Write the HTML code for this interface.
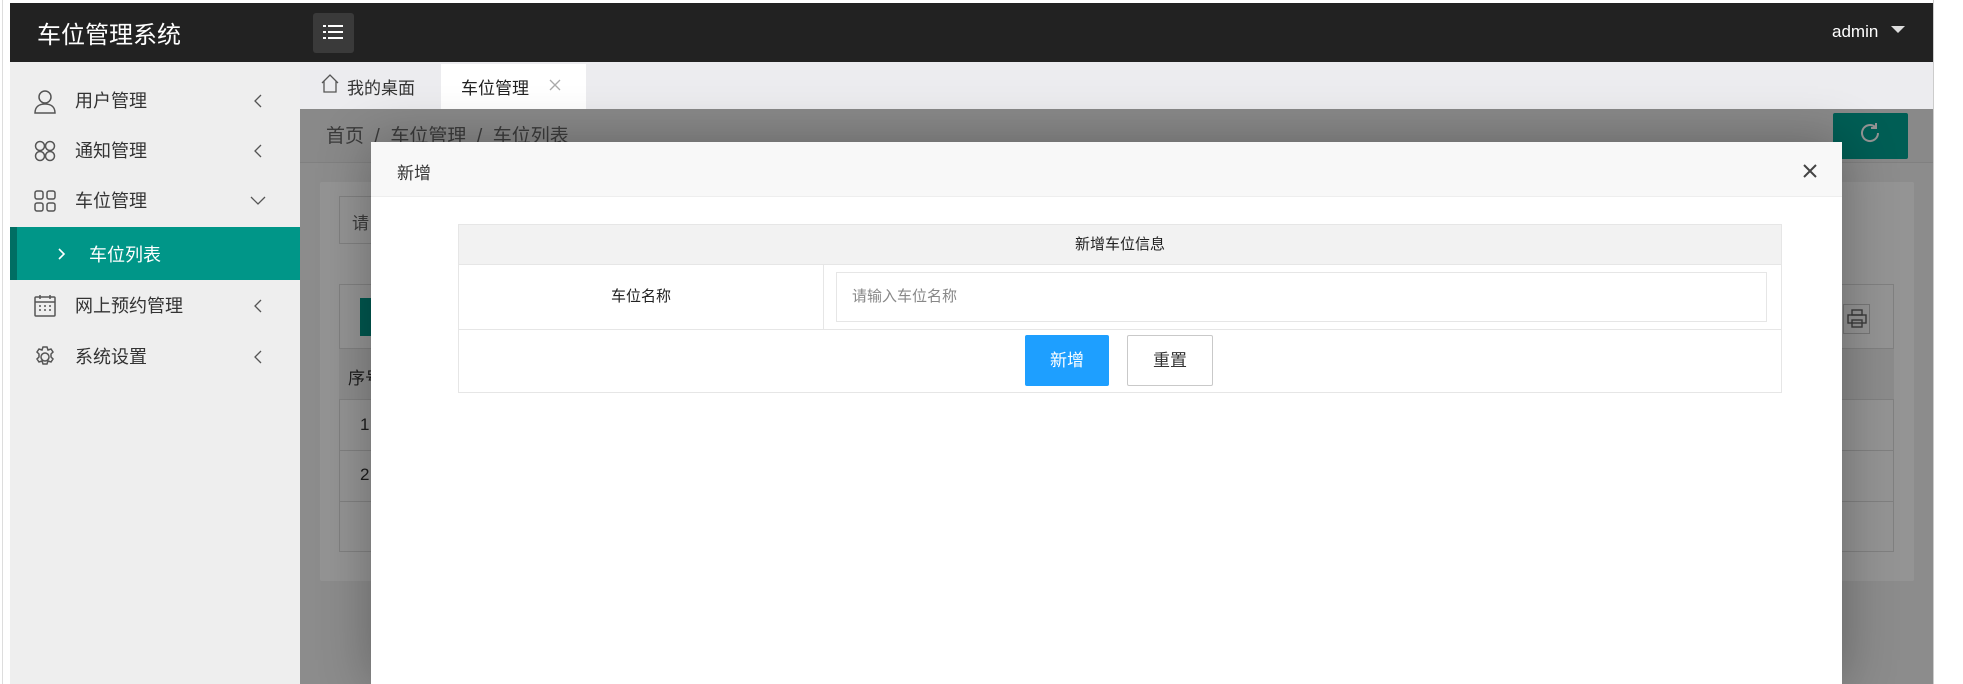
<!DOCTYPE html>
<html><head><meta charset="utf-8"><style>
*{margin:0;padding:0;box-sizing:border-box}
body{width:1963px;height:684px;overflow:hidden;background:#fff;position:relative;font-family:"Liberation Sans","Noto Sans CJK SC",sans-serif;font-size:17px;color:#333}
.a{position:absolute}
.top{left:10px;top:3px;width:1923px;height:59px;background:#222}
.side{left:10px;top:62px;width:290px;height:622px;background:#eee}
.mi{position:absolute;left:0;width:290px;height:50px;line-height:50px;font-size:18px;color:#333}
.mi .t{position:absolute;left:65px}
.mi .ch{position:absolute;left:243px;top:18px}
.mi svg.ic{position:absolute;left:24px;top:14px}
.tabs{left:300px;top:62px;width:1633px;height:47px;background:#ececef}
.ct{left:300px;top:109px;width:1633px;height:575px;background:#f2f2f2}
.ov{left:300px;top:109px;width:1633px;height:575px;background:rgba(0,0,0,0.42)}
</style></head><body>
<div class="a" style="left:1933px;top:0;width:1px;height:684px;background:#ccc"></div>
<div class="a" style="left:0;top:0;width:3px;height:684px;border-right:1px solid #ddd"></div>
<div class="a top"></div>
<div class="a" style="left:37px;top:15px;color:#fff;font-size:24px">车位管理系统</div>
<div class="a" style="left:313px;top:13px;width:41px;height:40px;background:#3a3a3a;border-radius:3px"></div>
<svg class="a" style="left:323px;top:25px" width="22" height="16"><g fill="#fff"><rect x="0" y="0" width="3" height="2"/><rect x="5" y="0" width="15" height="2"/><rect x="0" y="6" width="3" height="2"/><rect x="5" y="6" width="15" height="2"/><rect x="0" y="12" width="3" height="2"/><rect x="5" y="12" width="15" height="2"/></g></svg>
<div class="a" style="left:1832px;top:22px;color:#fff;font-size:17px">admin</div>
<div class="a" style="left:1891px;top:26px;width:0;height:0;border-left:7px solid transparent;border-right:7px solid transparent;border-top:7px solid #ddd"></div>

<div class="a side">
 <div class="mi" style="top:14px"><svg class="ic" width="22" height="24" fill="none" stroke="#555" stroke-width="1.5"><circle cx="11" cy="7" r="6"/><path d="M1 23c0-6 4-9 10-9s10 3 10 9z"/></svg><span class="t">用户管理</span><svg class="ch" width="10" height="14" fill="none" stroke="#555" stroke-width="1.3"><path d="M8 1L2 7l6 6"/></svg></div>
 <div class="mi" style="top:64px"><svg class="ic" width="22" height="22" fill="none" stroke="#555" stroke-width="1.5"><circle cx="6" cy="6" r="4.5"/><circle cx="16" cy="6" r="4.5"/><circle cx="6" cy="16" r="4.5"/><circle cx="16" cy="16" r="4.5"/></svg><span class="t">通知管理</span><svg class="ch" width="10" height="14" fill="none" stroke="#555" stroke-width="1.3"><path d="M8 1L2 7l6 6"/></svg></div>
 <div class="mi" style="top:114px"><svg class="ic" width="22" height="22" fill="none" stroke="#555" stroke-width="1.5"><rect x="1" y="1" width="8" height="8" rx="2"/><rect x="13" y="1" width="8" height="8" rx="2"/><rect x="1" y="13" width="8" height="8" rx="2"/><rect x="13" y="13" width="8" height="8" rx="2"/></svg><span class="t">车位管理</span><svg class="ch" style="left:240px;top:20px" width="16" height="10" fill="none" stroke="#555" stroke-width="1.3"><path d="M1 1l7 7 7-7"/></svg></div>
 <div class="a" style="left:0;top:165px;width:290px;height:53px;background:#009688;border-left:7px solid #006e63"></div>
 <svg class="a" style="left:48px;top:186px" width="8" height="12" fill="none" stroke="#fff" stroke-width="1.6"><path d="M1 1l5 5-5 5"/></svg>
 <div class="a" style="left:79px;top:179px;color:#fff;font-size:18px">车位列表</div>
 <div class="mi" style="top:219px"><svg class="ic" width="22" height="22" fill="none" stroke="#555" stroke-width="1.5"><rect x="1" y="2" width="20" height="19" rx="1"/><path d="M1 7h20M6 0v4M16 0v4M5 11h2M10 11h2M15 11h2M5 15h2M10 15h2M15 15h2"/></svg><span class="t">网上预约管理</span><svg class="ch" width="10" height="14" fill="none" stroke="#555" stroke-width="1.3"><path d="M8 1L2 7l6 6"/></svg></div>
 <div class="mi" style="top:270px"><svg class="ic" width="22" height="22" fill="none" stroke="#555" stroke-width="1.5"><circle cx="11" cy="11" r="4"/><path d="M9 1h4l1 3 3-1 2 3-2 2 0 3 2 2-2 3-3-1-1 3h-4l-1-3-3 1-2-3 2-2v-3l-2-2 2-3 3 1z"/></svg><span class="t">系统设置</span><svg class="ch" width="10" height="14" fill="none" stroke="#555" stroke-width="1.3"><path d="M8 1L2 7l6 6"/></svg></div>
</div>

<div class="a tabs"></div>
<svg class="a" style="left:320px;top:73px" width="20" height="20" fill="none" stroke="#555" stroke-width="1.3"><path d="M2 10L10 2l8 8M4 8v11h12V8"/></svg>
<div class="a" style="left:347px;top:74px;font-size:17px;color:#333">我的桌面</div>
<div class="a" style="left:441px;top:64px;width:145px;height:45px;background:#fff"></div>
<div class="a" style="left:461px;top:74px;font-size:17px;color:#222">车位管理</div>
<svg class="a" style="left:549px;top:79px" width="12" height="12" stroke="#aaa" stroke-width="1.3"><path d="M1 1l10 10M11 1L1 11"/></svg>

<div class="a ct"></div>
<div class="a" style="left:300px;top:109px;width:1633px;height:54px;background:#ececec;border-bottom:1px solid #ddd"></div>
<div class="a" style="left:326px;top:121px;font-size:19px;color:#666">首页 &nbsp;/&nbsp; 车位管理 &nbsp;/&nbsp; 车位列表</div>
<div class="a" style="left:1833px;top:113px;width:75px;height:46px;background:#00a393;border-radius:2px"></div>
<svg class="a" style="left:1858px;top:121px" width="24" height="24" fill="none" stroke="#fff" stroke-width="2"><path d="M20 12a8 8 0 1 1-3-6.2M18 2v5h-5"/></svg>
<div class="a" style="left:320px;top:182px;width:1594px;height:399px;background:#fff;border-radius:2px"></div>
<div class="a" style="left:339px;top:196px;width:300px;height:48px;border:1px solid #ddd;padding:12px;color:#666">请</div>
<div class="a" style="left:339px;top:284px;width:1555px;height:268px;border:1px solid #ddd"></div>
<div class="a" style="left:360px;top:298px;width:60px;height:38px;background:#009688"></div>
<div class="a" style="left:339px;top:348px;width:1555px;height:52px;background:#f2f2f2;border-top:1px solid #ddd;border-bottom:1px solid #ddd;padding:15px 9px">序号</div>
<div class="a" style="left:339px;top:450px;width:1555px;height:1px;background:#ddd"></div>
<div class="a" style="left:339px;top:501px;width:1555px;height:1px;background:#ddd"></div>
<div class="a" style="left:360px;top:415px">1</div>
<div class="a" style="left:360px;top:465px">2</div>
<div class="a" style="left:1843px;top:304px;width:27px;height:30px;border:1px solid #ccc"></div>
<svg class="a" style="left:1847px;top:309px" width="20" height="20" fill="none" stroke="#666" stroke-width="1.4"><rect x="5" y="1" width="10" height="5"/><rect x="1" y="6" width="18" height="8"/><rect x="5" y="11" width="10" height="7"/></svg>
<div class="a ov"></div>

<div class="a" style="left:371px;top:142px;width:1471px;height:542px;background:#fff;box-shadow:1px 1px 50px rgba(0,0,0,.3)"></div>
<div class="a" style="left:371px;top:142px;width:1471px;height:55px;background:#f8f8f8;border-bottom:1px solid #eee"></div>
<div class="a" style="left:397px;top:159px;font-size:17px;color:#333">新增</div>
<svg class="a" style="left:1802px;top:163px" width="16" height="16" stroke="#444" stroke-width="2"><path d="M2 2l12 12M14 2L2 14"/></svg>

<div class="a" style="left:458px;top:224px;width:1324px;height:169px;border:1px solid #e6e6e6"></div>
<div class="a" style="left:459px;top:225px;width:1322px;height:40px;background:#f2f2f2;border-bottom:1px solid #e6e6e6;text-align:center;line-height:40px;font-size:15px;color:#222">新增车位信息</div>
<div class="a" style="left:823px;top:265px;width:1px;height:64px;background:#e6e6e6"></div>
<div class="a" style="left:459px;top:265px;width:364px;height:64px;line-height:64px;text-align:center;font-size:15px;color:#222">车位名称</div>
<div class="a" style="left:459px;top:329px;width:1322px;height:1px;background:#e6e6e6"></div>
<div class="a" style="left:836px;top:272px;width:931px;height:50px;border:1px solid #e6e6e6;padding-left:15px;line-height:48px;font-size:15px;color:#888">请输入车位名称</div>
<div class="a" style="left:1025px;top:335px;width:84px;height:51px;background:#1E9FFF;border-radius:2px;color:#fff;font-size:17px;text-align:center;line-height:51px">新增</div>
<div class="a" style="left:1127px;top:335px;width:86px;height:51px;border:1px solid #c9c9c9;border-radius:2px;color:#333;font-size:17px;text-align:center;line-height:49px;background:#fff">重置</div>
</body></html>
